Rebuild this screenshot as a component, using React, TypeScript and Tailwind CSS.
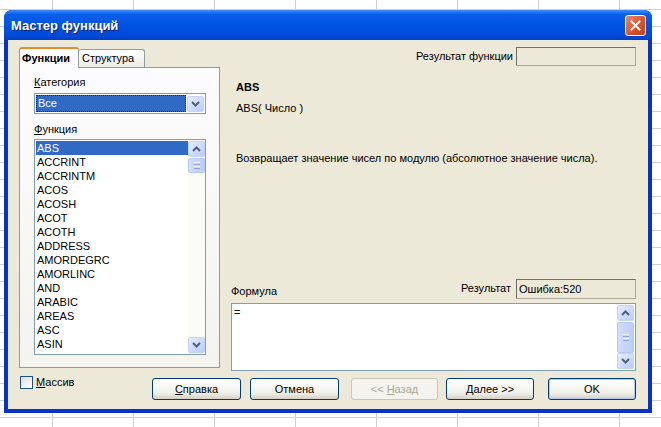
import React from 'react';

const items = [
  'ABS', 'ACCRINT', 'ACCRINTM', 'ACOS', 'ACOSH', 'ACOT', 'ACOTH', 'ADDRESS',
  'AMORDEGRC', 'AMORLINC', 'AND', 'ARABIC', 'AREAS', 'ASC', 'ASIN'
];

function Chevron({down}: {down?: boolean}) {
  return (
    <svg width="9" height="6" viewBox="0 0 9 6" className={down ? 'rotate-180' : ''}>
      <path d="M1 5 L4.5 1.5 L8 5" fill="none" stroke="#4d6185" strokeWidth="2" />
    </svg>
  );
}

function ScrollBtn({down}: {down?: boolean}) {
  return (
    <div className="w-[17px] h-[16px] rounded-[2px] border border-[#c3d3fd] bg-[linear-gradient(135deg,#e6eefd,#b9cbf7)] flex items-center justify-center">
      <Chevron down={down} />
    </div>
  );
}

function Thumb({h}: {h: number}) {
  return (
    <div
      className="w-[17px] rounded-[2px] border border-[#b6c9f5] bg-[linear-gradient(to_right,#d2defb,#bccdf7)] flex flex-col items-center justify-center gap-[1px]"
      style={{height: h}}
    >
      <div className="w-[6px] h-px bg-[#eef3fe]" />
      <div className="w-[6px] h-px bg-[#8ca4dc]" />
      <div className="w-[6px] h-px bg-[#eef3fe]" />
      <div className="w-[6px] h-px bg-[#8ca4dc]" />
    </div>
  );
}

function Btn({children, w, disabled, focus}: {children: React.ReactNode; w: number; disabled?: boolean; focus?: boolean}) {
  return (
    <div
      className={
        'h-[22px] rounded-[3px] border flex items-center justify-center ' +
        (disabled
          ? 'border-[#c9c7ba] bg-[#f4f3ee] text-[#aca899]'
          : 'border-[#003c74] bg-[linear-gradient(to_bottom,#ffffff,#f0f0ea_70%,#d6d0c5)] text-black') +
        (focus ? ' shadow-[inset_0_0_0_1px_#b2c9f1]' : '')
      }
      style={{width: w}}
    >
      {children}
    </div>
  );
}

export default function App() {
  return (
    <div className="w-[661px] h-[427px] overflow-hidden bg-white bg-[linear-gradient(to_right,#cfcfcf_1px,transparent_1px),linear-gradient(to_bottom,#cfcfcf_1px,transparent_1px)] [background-size:81px_17px] [background-position:52px_9px] pt-[10px] pl-[4px] font-['Liberation_Sans',Arial,sans-serif] text-[11px] leading-[13px] text-black">
      <div className="w-[648px] h-[403px] rounded-t-[8px] bg-[#0832c8] flex flex-col">
        {/* Title bar */}
        <div className="h-[30px] rounded-t-[8px] bg-[linear-gradient(to_bottom,#3d8df7_0%,#0a5ee8_15%,#0054e3_50%,#004ad8_85%,#0040c4_100%)] flex items-center pl-[7px] pr-[6px]">
          <div className="text-white font-bold text-[13px] [text-shadow:1px_1px_0_#0a1e70]">Мастер функций</div>
          <div className="flex-1" />
          <div className="w-[21px] h-[21px] rounded-[3px] border border-white bg-[linear-gradient(135deg,#e8876a,#d9542c_55%,#c4401c)] flex items-center justify-center">
            <svg width="11" height="11" viewBox="0 0 11 11">
              <path d="M1.5 1.5 L9.5 9.5 M9.5 1.5 L1.5 9.5" stroke="white" strokeWidth="2" strokeLinecap="square" />
            </svg>
          </div>
        </div>

        {/* Body */}
        <div className="mx-[4px] mb-[4px] flex-1 bg-[#ece9d8] flex flex-col">
          <div className="flex">
            {/* Left: tabs */}
            <div className="ml-[11px] mt-[7px] w-[201px] flex flex-col">
              <div className="flex items-end h-[20px]">
                <div className="relative z-10 -mb-px h-[21px] w-[60px] rounded-t-[3px] border border-b-0 border-[#919b9c] border-t-[#e68b2c] border-t-2 bg-[#fcfcfe] font-bold flex items-center pl-[2px]">
                  Функции
                </div>
                <div className="h-[18px] w-[66px] rounded-t-[3px] border border-b-0 border-l-0 border-[#919b9c] bg-[linear-gradient(to_bottom,#ffffff,#ecebe5)] flex items-center pl-[3px]">
                  Структура
                </div>
              </div>
              <div className="h-[301px] border border-[#919b9c] bg-[linear-gradient(to_bottom,#fcfcfe,#f4f3ee)] pl-[14px] pt-[8px]">
                <div><span className="underline">К</span>атегория</div>
                <div className="mt-[4px] w-[172px] h-[21px] border border-[#7f9db9] bg-white flex items-center p-px">
                  <div className="w-[151px] h-[17px] bg-[#316ac5] text-white outline outline-1 outline-dotted outline-[#0a2a70] -outline-offset-1 flex items-center pl-[2px]">
                    Все
                  </div>
                  <div className="ml-[1px]">
                    <ScrollBtn down />
                  </div>
                </div>
                <div className="mt-[9px]"><span className="underline">Ф</span>ункция</div>
                <div className="mt-[3px] w-[172px] h-[216px] border border-[#7f9db9] bg-white flex">
                  <div className="flex-1 pt-px pl-px">
                    {items.map((it, i) => (
                      <div
                        key={it}
                        className={'h-[14px] flex items-center pl-[1px] ' + (i === 0 ? 'bg-[#316ac5] text-white' : '')}
                      >
                        {it}
                      </div>
                    ))}
                  </div>
                  <div className="w-[17px] bg-[#fbfbf8] flex flex-col pt-px">
                    <ScrollBtn />
                    <div className="mt-px">
                      <Thumb h={15} />
                    </div>
                    <div className="flex-1" />
                    <div className="mb-px">
                      <ScrollBtn down />
                    </div>
                  </div>
                </div>
              </div>
            </div>

            {/* Right */}
            <div className="ml-[11px] w-[405px] flex flex-col">
              <div className="mt-[7px] flex items-center justify-end">
                <span>Результат функции</span>
                <div className="ml-[3px] w-[120px] h-[19px] border border-[#aca899] border-t-[#716f64] border-l-[#716f64] bg-[#ece9d8]" />
              </div>
              <div className="ml-[5px] mt-[15px] font-bold">ABS</div>
              <div className="ml-[5px] mt-[8px]">ABS( Число )</div>
              <div className="ml-[5px] mt-[37px]">Возвращает значение чисел по модулю (абсолютное значение числа).</div>
              <div className="mt-[114px] flex items-end">
                <span className="mb-[1px]">Формула</span>
                <div className="flex-1" />
                <span className="mb-[4px]">Результат</span>
                <div className="ml-[5px] w-[120px] h-[20px] border border-[#aca899] border-t-[#716f64] border-l-[#716f64] bg-[#ece9d8] flex items-center pl-[2px]">
                  Ошибка:520
                </div>
              </div>
              <div className="mt-[4px] h-[68px] border border-[#7f9db9] bg-white flex">
                <div className="flex-1 pl-[2px] pt-[2px]">=</div>
                <div className="w-[17px] flex flex-col py-px mr-px">
                  <ScrollBtn />
                  <div className="mt-px">
                    <Thumb h={31} />
                  </div>
                  <div className="flex-1" />
                  <ScrollBtn down />
                </div>
              </div>
            </div>
          </div>

          {/* Bottom row */}
          <div className="mt-[5px] flex items-start">
            <div className="ml-[12px] w-[132px] flex items-center">
              <div className="w-[13px] h-[13px] border border-[#1c5180] bg-[linear-gradient(135deg,#dcdcd7,#ffffff)]" />
              <div className="ml-[3px]"><span className="underline">М</span>ассив</div>
            </div>
            <div className="mt-[2px] flex">
              <Btn w={89}><span className="underline">С</span>правка</Btn>
              <div className="ml-[9px]"><Btn w={89}>Отмена</Btn></div>
              <div className="ml-[12px]"><Btn w={87} disabled>&lt;&lt; <span className="underline ml-[3px]">Н</span>азад</Btn></div>
              <div className="ml-[8px]"><Btn w={88}><span className="underline">Д</span>алее &gt;&gt;</Btn></div>
              <div className="ml-[14px]"><Btn w={88} focus>OK</Btn></div>
            </div>
          </div>
        </div>
      </div>
    </div>
  );
}
